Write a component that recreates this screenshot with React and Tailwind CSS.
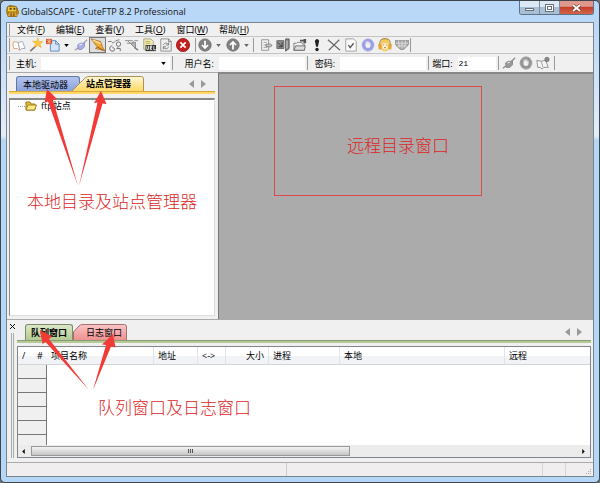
import { useState } from "react";
import clsx from "clsx";

const menus = [
  ["文件", "F"],
  ["编辑", "E"],
  ["查看", "V"],
  ["工具", "O"],
  ["窗口", "W"],
  ["帮助", "H"],
];

const columns = [
  { label: "/", width: "w-[15px]" },
  { label: "#", width: "w-[14px]" },
  { label: "项目名称", width: "w-[107px]" },
  { label: "地址", width: "w-[44px]" },
  { label: "<->", width: "w-[28px]" },
  { label: "大小", width: "w-[43px]", align: "text-right" },
  { label: "进程", width: "w-[71px]" },
  { label: "本地", width: "w-[165px]" },
  { label: "远程", width: "w-auto" },
];

function Glyph({ children }) {
  return (
    <svg viewBox="0 0 16 16" className="h-[14px] w-[14px]" fill="none" aria-hidden="true">
      {children}
    </svg>
  );
}

const icons = {
  book: (
    <Glyph>
      <path d="M2 4l5 1 2 9-3-2-4 0-1-5z" fill="#fff" stroke="#e2a06a" />
      <path d="M7 5l5-1 3 8-4 0-2 2z" fill="#fff" stroke="#96a3c2" />
    </Glyph>
  ),
  wand: (
    <Glyph>
      <path d="M1.500 15L8 9" stroke="#7d7468" strokeWidth="1.800" />
      <path d="M10 0l1.500 4 4.500 0-3.500 3 1.500 4-4-2.500-4 2 1.500-4L4 3.500l4.500.5z" fill="#fbc93f" stroke="#eaa92a" strokeWidth=".6" />
    </Glyph>
  ),
  newDoc: (
    <Glyph>
      <path d="M5 3h6l4 4v8H5z" fill="#d3e5fa" stroke="#5c86bd" />
      <path d="M11 3v4h4" stroke="#5c86bd" />
      <path d="M0 1h7v6H0z" fill="#d9512f" />
      <path d="M1 2l5 4M6 2L1 6M3.500 1v6" stroke="#ffd9a0" strokeWidth=".8" />
    </Glyph>
  ),
  plug: (
    <Glyph>
      <path d="M1 14l4-3M11 6l4-4" stroke="#a2a3b4" strokeWidth="1.500" />
      <path d="M4 8l3-2 5 0 0 4-3 3-4 0z" fill="#a9aee6" stroke="#8f93c4" />
      <path d="M6 8l3-1" stroke="#e8eaff" strokeWidth="1.500" />
    </Glyph>
  ),
  connect: (
    <Glyph>
      <path d="M0 1l11 3 2 6 3 5-6-2-5-1 2-2z" fill="#f2ab35" stroke="#9c6420" strokeWidth=".8" />
      <path d="M2 2.500l9 4" stroke="#ffe49a" strokeWidth="1.500" />
      <path d="M7 10l7 4" stroke="#8a5217" />
    </Glyph>
  ),
  chain: (
    <Glyph>
      <path d="M0 4h4l2 2 3-3 4-1" stroke="#777" />
      <path d="M5 9c-4 0-4 6 0 6s3-4 0-4" stroke="#555" />
      <circle cx="12" cy="7" r="2.500" stroke="#666" />
      <path d="M12 10l-2 2h4v3" stroke="#666" />
    </Glyph>
  ),
  unplug: (
    <Glyph>
      <path d="M0 3h9M2 6h6l3-3h4M3 3l8 8" stroke="#888" />
      <path d="M6 6l6 6V5z" fill="#b5b5b5" stroke="#888" />
      <path d="M11 11l4 3" stroke="#777" strokeWidth="1.500" />
    </Glyph>
  ),
  url: (
    <Glyph>
      <path d="M2 1h8l3 3v9H2z" fill="#f1ebb8" stroke="#a5a080" />
      <path d="M4 4h5M4 6h6" stroke="#b9a94e" />
      <path d="M4 8h12v7H4z" fill="#2f2f2f" />
      <path d="M5.500 9v4h2V9M9.500 14V9h1.500v2H9.500l2 3M13.500 9v4.500H16" stroke="#fff" strokeWidth=".9" />
    </Glyph>
  ),
  refreshDoc: (
    <Glyph>
      <path d="M2 1h9l3 3v11H2z" fill="#eee" stroke="#8a8a8a" />
      <path d="M11 1v3h3M5 8c1-3 5-3 6 0M11 5v3H8M11 10c-1 3-5 3-6 0M5 13v-3h3" stroke="#777" />
    </Glyph>
  ),
  stop: (
    <Glyph>
      <circle cx="8" cy="8" r="7.500" fill="#c5201f" stroke="#962022" />
      <path d="M5 5l6 6M11 5l-6 6" stroke="#fff" strokeWidth="2" />
    </Glyph>
  ),
  download: (
    <Glyph>
      <circle cx="8" cy="8" r="7" fill="#808080" stroke="#6a6a6a" />
      <path d="M8 3v8M4.500 8L8 11.500 11.500 8" stroke="#fff" strokeWidth="2" />
    </Glyph>
  ),
  upload: (
    <Glyph>
      <circle cx="8" cy="8" r="7" fill="#808080" stroke="#6a6a6a" />
      <path d="M8 13V5M4.500 8L8 4.500 11.500 8" stroke="#fff" strokeWidth="2" />
    </Glyph>
  ),
  edit: (
    <Glyph>
      <path d="M3 2h8v12H3z" fill="#f5f5f5" stroke="#8a8a8a" />
      <path d="M5 5h4M5 8h3M5 11h4" stroke="#999" />
      <path d="M8 7h5l2 1.500-2 1.500H8z" fill="#ccc" stroke="#777" />
    </Glyph>
  ),
  compare: (
    <Glyph>
      <path d="M1 3h8v9H1z" fill="#8f8f8f" stroke="#666" />
      <path d="M2 5l5 5M7 5v5H3" stroke="#333" />
      <path d="M11 1h4v11l-4 3z" fill="#888" stroke="#555" />
      <path d="M12.500 3v9" stroke="#ddd" />
    </Glyph>
  ),
  folder: (
    <Glyph>
      <path d="M1 14V6h3l1-1h5l1 2h2v7z" fill="#f2f2f2" stroke="#777" />
      <path d="M1 14l2-5h11l-1 5z" fill="#ddd" stroke="#666" />
      <path d="M8 4V2h4V1h3v5h-3V4z" fill="#555" />
    </Glyph>
  ),
  bang: (
    <Glyph>
      <path d="M5.500 3Q8-1 10.500 3L9 10H7z" fill="#222" />
      <circle cx="8" cy="13" r="2" fill="#222" />
    </Glyph>
  ),
  cross: (
    <Glyph>
      <path d="M1 2l14 12M14 2L2 14" stroke="#666" strokeWidth="1.300" />
    </Glyph>
  ),
  checkDoc: (
    <Glyph>
      <path d="M2 1h9l3 3v11H2z" fill="#fafafa" stroke="#999" />
      <path d="M5 8l2 3 4-5" stroke="#555" strokeWidth="1.500" />
    </Glyph>
  ),
  gear: (
    <Glyph>
      <ellipse cx="8" cy="8" rx="5" ry="5.500" stroke="#9ba0e2" strokeWidth="4" />
      <circle cx="8" cy="8" r="7" stroke="#c3c6f2" strokeDasharray="2 2" />
      <path d="M5 5l3-1 3 3" stroke="#c9ccf6" strokeWidth="1.500" />
    </Glyph>
  ),
  grayGear: (
    <Glyph>
      <ellipse cx="8" cy="8" rx="5" ry="5.500" stroke="#969696" strokeWidth="4" />
      <circle cx="8" cy="8" r="7" stroke="#bbb" strokeDasharray="2 2" />
      <path d="M5 5l3-1 3 3" stroke="#c5c5c5" strokeWidth="1.500" />
    </Glyph>
  ),
  headset: (
    <Glyph>
      <path d="M3 6c0-7 10-7 10 0v6l-3 3H6l-3-3z" fill="#f6c95a" />
      <path d="M2 9V6c0-7 12-7 12 0v3" stroke="#b08c45" strokeWidth="1.300" />
      <path d="M0 7h4v6H1zM12 7h4l-1 6h-3z" fill="#e3a339" />
      <path d="M5 6h6v6l-2 1H7l-2-1z" fill="#fdf0cc" />
      <path d="M6 8h1M9 8h1M7 11h2" stroke="#8b6937" />
    </Glyph>
  ),
  globe: (
    <Glyph>
      <path d="M0 3h16c0 3-1 6-3 7l-3 3H6l-3-3C1 9 0 6 0 3z" fill="#a8a8a8" stroke="#8d8d8d" />
      <path d="M1 6h14M3 9h10M4 3l1 8M8 3v9M12 3l-1 8" stroke="#e0e0e0" />
    </Glyph>
  ),
  grayPlug: (
    <Glyph>
      <path d="M1 14l4-3M11 6l4-4" stroke="#8d8d8d" strokeWidth="1.500" />
      <path d="M4 8l3-2 5 0 0 4-3 3-4 0z" fill="#999" stroke="#858585" />
      <path d="M6 8l3-1" stroke="#ddd" strokeWidth="1.500" />
    </Glyph>
  ),
  bookGear: (
    <Glyph>
      <path d="M1 5l5 1 5-1 3 8-5 0-2 2-2-2-3 0z" fill="#f5f5f5" stroke="#888" />
      <path d="M6 6l2 7" stroke="#999" />
      <circle cx="12.500" cy="4" r="2.500" fill="#888" stroke="#777" />
    </Glyph>
  ),
};

function AppIcon() {
  return (
    <svg viewBox="0 0 14 14" className="h-[13px] w-[13px] shrink-0" aria-hidden="true">
      <path d="M1 2l3-2 7 1 2 3-1 9H2L0 7z" fill="#8d6a1b" />
      <path d="M2 2h9v5H2z" fill="#f0c838" />
      <path d="M3 8h8l1 4H2z" fill="#e4a62a" />
      <path d="M4 3h2v2H4zM8 3h2v2H8zM5 9h1v3H5zM8 9h1v3H8z" fill="#4b3a1a" />
      <path d="M11 6h3v4h-3zM0 5h2v4H0z" fill="#b98620" />
    </svg>
  );
}

function ToolButton({ icon, label, pressed }) {
  return (
    <button
      type="button"
      aria-label={label}
      aria-pressed={pressed}
      className={clsx(
        "flex h-4 w-[17px] shrink-0 items-center justify-center",
        pressed && "border border-[#777] bg-[#dedede]"
      )}
    >
      {icons[icon]}
    </button>
  );
}

function DropArrow({ label, dark }) {
  return (
    <button type="button" aria-label={label} className="flex h-4 w-[11px] shrink-0 items-center justify-center">
      <svg viewBox="0 0 6 4" className={clsx("h-[3px] w-[5px]", dark ? "fill-black" : "fill-[#666]")}>
        <path d="M0 0h6L3 4z" />
      </svg>
    </button>
  );
}

function Separator() {
  return <span className="h-[14px] w-px shrink-0 bg-[#999]" />;
}

function TitleBar() {
  return (
    <header className="flex h-[21px] shrink-0 items-start justify-between">
      <div className="flex h-[21px] items-center gap-[2px]">
        <AppIcon />
        <h1 className="font-['Open_Sans',sans-serif] text-[9px] leading-none text-[#111]">
          GlobalSCAPE - CuteFTP 8.2 Professional
        </h1>
      </div>
      <div className="flex h-[14px] overflow-hidden rounded-b-[3px] border border-t-0 border-[#5d7388]">
        <button
          type="button"
          aria-label="最小化"
          className="flex w-5 items-center justify-center border-r border-[#7a8da0] bg-linear-to-b from-[#dce9f5] from-50% to-[#a9bfd5] to-50%"
        >
          <span className="mt-1 h-[3px] w-[9px] border border-[#66717d] bg-white" />
        </button>
        <button
          type="button"
          aria-label="最大化"
          className="flex w-5 items-center justify-center border-r border-[#7a8da0] bg-linear-to-b from-[#dce9f5] from-50% to-[#a9bfd5] to-50%"
        >
          <span className="flex h-2 w-[9px] items-center justify-center border border-[#66717d] bg-white">
            <span className="h-1 w-[5px] border border-[#66717d]" />
          </span>
        </button>
        <button
          type="button"
          aria-label="关闭"
          className="flex w-[33px] items-center justify-center bg-linear-to-b from-[#e0988c] from-40% via-[#c3402b] via-50% to-[#d4654a]"
        >
          <svg viewBox="0 0 9 8" className="h-2 w-[9px]">
            <path d="M1 1l7 6M8 1L1 7" stroke="#6e2a22" strokeWidth="3" />
            <path d="M1 1l7 6M8 1L1 7" stroke="#fff" strokeWidth="2" />
          </svg>
        </button>
      </div>
    </header>
  );
}

function MenuBar() {
  return (
    <nav className="flex h-[14px] shrink-0 items-center border-b border-[#c4c4c4] pl-[2px]">
      <ul className="flex gap-[11px] border-l border-[#999] pl-[7px]">
        {menus.map(([name, key]) => (
          <li key={key} className="flex">
            <button type="button" className="leading-[12px]">
              {name}(<span className="underline">{key}</span>)
            </button>
          </li>
        ))}
      </ul>
    </nav>
  );
}

function Toolbar() {
  return (
    <div role="toolbar" className="flex h-[17px] shrink-0 items-center border-b border-[#c4c4c4] pl-[2px]">
      <Separator />
      <ToolButton icon="book" label="站点管理器" />
      <ToolButton icon="wand" label="连接向导" />
      <ToolButton icon="newDoc" label="新建" />
      <DropArrow label="新建选项" dark />
      <ToolButton icon="plug" label="连接" />
      <ToolButton icon="connect" label="快速连接" pressed />
      <ToolButton icon="chain" label="重新连接" />
      <ToolButton icon="unplug" label="断开" />
      <ToolButton icon="url" label="URL" />
      <ToolButton icon="refreshDoc" label="刷新" />
      <ToolButton icon="stop" label="停止" />
      <div className="flex items-center pr-px pl-1">
        <Separator />
        <ToolButton icon="download" label="下载" />
        <DropArrow label="下载选项" />
        <ToolButton icon="upload" label="上传" />
        <DropArrow label="上传选项" />
      </div>
      <Separator />
      <div className="flex items-center pl-[3px]">
        <ToolButton icon="edit" label="编辑" />
        <ToolButton icon="compare" label="比较" />
        <ToolButton icon="folder" label="新建文件夹" />
        <ToolButton icon="bang" label="执行" />
        <ToolButton icon="cross" label="删除" />
        <ToolButton icon="checkDoc" label="属性" />
        <ToolButton icon="gear" label="选项" />
        <ToolButton icon="headset" label="支持" />
        <ToolButton icon="globe" label="网站" />
      </div>
      <Separator />
    </div>
  );
}

function Field({ id, label, width, value }) {
  const [text, setText] = useState(value ?? "");
  return (
    <div className="flex items-center gap-[5px]">
      <label htmlFor={id} className="leading-none">
        {label}:
      </label>
      <input
        id={id}
        value={text}
        onChange={(e) => setText(e.target.value)}
        className={clsx("h-[13px] bg-white px-px font-['Liberation_Mono',monospace] text-[8px]", width)}
      />
    </div>
  );
}

function ConnectBar() {
  return (
    <form className="flex h-[18px] shrink-0 items-center pl-[2px]">
      <Separator />
      <div className="flex items-center gap-[5px] pr-[2px] pl-[6px]">
        <label htmlFor="host" className="leading-none">
          主机:
        </label>
        <div className="relative flex">
          <select id="host" className="h-[13px] w-[129px] appearance-none bg-white text-[8px]" />
          <svg viewBox="0 0 6 4" className="pointer-events-none absolute top-[5px] right-1 h-[3px] w-[5px]">
            <path d="M0 0h6L3 4z" />
          </svg>
        </div>
      </div>
      <Separator />
      <div className="pr-[2px] pl-[11px]">
        <Field id="user" label="用户名" width="w-[86px]" />
      </div>
      <Separator />
      <div className="pr-[2px] pl-[7px]">
        <Field id="password" label="密码" width="w-[86px]" />
      </div>
      <Separator />
      <div className="pr-[2px] pl-[3px]">
        <Field id="port" label="端口" width="w-[38px]" value="21" />
      </div>
      <Separator />
      <div className="flex items-center px-[2px]">
        <ToolButton icon="grayPlug" label="连接" />
        <ToolButton icon="grayGear" label="设置" />
        <ToolButton icon="bookGear" label="添加到站点管理器" />
      </div>
      <Separator />
    </form>
  );
}

// pair of small triangles that scroll a tab strip
function TabScroller() {
  return (
    <div className="ml-auto flex items-center gap-[7px]">
      <button type="button" aria-label="上一个">
        <svg viewBox="0 0 5 8" className="h-2 w-[5px] fill-[#999]">
          <path d="M5 0v8L0 4z" />
        </svg>
      </button>
      <button type="button" aria-label="下一个">
        <svg viewBox="0 0 5 8" className="h-2 w-[5px] fill-[#999]">
          <path d="M0 0v8l5-4z" />
        </svg>
      </button>
    </div>
  );
}

function Note({ className, children }) {
  return (
    <p
      className={clsx(
        "pointer-events-none absolute text-[17px] leading-5 font-light whitespace-nowrap text-[#dc2626]",
        className
      )}
    >
      {children}
    </p>
  );
}

function SitePane() {
  return (
    <section className="relative flex w-[212px] shrink-0 flex-col border-t border-r border-t-[#aaa] border-r-[#777] pt-[3px] pr-[3px] pl-[2px]">
      <div role="tablist" className="flex h-[15px] pr-[9px] pl-[7px]">
        <button
          role="tab"
          aria-selected="false"
          className="relative -mr-2 flex w-[64px] items-center rounded-t-[3px] border border-b-0 border-[#64789f] bg-linear-to-b from-[#b3c4ec] to-[#8ba2dd] pl-[6px] leading-none"
        >
          本地驱动器
        </button>
        <button role="tab" aria-selected="true" className="relative flex w-[72px] items-center pl-[14px] leading-none font-bold">
          <svg viewBox="0 0 72 15" preserveAspectRatio="none" className="absolute inset-0 h-full w-full">
            <defs>
              <linearGradient id="gold" x2="0" y2="1">
                <stop stopColor="#fff6d4" />
                <stop offset="1" stopColor="#ffd964" />
              </linearGradient>
            </defs>
            <path d="M0 15L12 3Q14 .5 17 .5H69.500Q71.500.5 71.500 3V15" fill="url(#gold)" stroke="#a9955c" />
          </svg>
          <span className="relative">站点管理器</span>
        </button>
        <TabScroller />
      </div>
      <div className="h-[3px] shrink-0 border-t border-[#d5a844] bg-[#ffd968]" />
      <div className="mt-1 mb-[3px] flex-1 border border-t-2 border-[#888] border-r-[#ddd] border-b-[#ddd] bg-white pl-2">
        <ul role="tree">
          <li role="treeitem" className="flex items-center leading-3">
            <span className="w-[7px] border-t border-dotted border-[#999]" />
            <svg viewBox="0 0 12 10" className="mr-1 h-[10px] w-3">
              <path d="M1 9V1h4l1 2h4v6z" fill="#e8bd34" stroke="#9a7918" />
              <path d="M1 9l2-5h8.500L9.500 9z" fill="#ffeb8a" stroke="#a58422" />
            </svg>
            ftp站点
          </li>
        </ul>
      </div>
      <svg viewBox="0 0 90 110" className="pointer-events-none absolute top-3 left-[26px] h-[110px] w-[90px] fill-[#f23a36]">
        <path d="M14 4L11.500 18l3.500-1.500L45 101 20 15l4-1zM68 6L61 18l3.500-.5L46 101 69.500 18.500l4 .5z" />
      </svg>
      <Note className="top-[119px] left-5">本地目录及站点管理器</Note>
    </section>
  );
}

function RemoteArea() {
  return (
    <section className="relative flex-1 border-t-2 border-[#888] bg-[#ababab]">
      <div className="absolute top-3 left-[55px] h-[110px] w-[208px] border border-[#dc4a4a]" />
      <Note className="top-[62px] left-32">远程目录窗口</Note>
    </section>
  );
}

function QueuePane() {
  return (
    <section className="relative flex h-[143px] shrink-0 border-t border-[#aaa]">
      <div className="flex w-[10px] shrink-0 flex-col items-center pt-1 pb-1">
        <button type="button" aria-label="关闭窗格">
          <svg viewBox="0 0 5 5" className="h-[5px] w-[5px]">
            <path d="M0 0l5 5M5 0L0 5" stroke="#111" strokeWidth="1" />
          </svg>
        </button>
        <span className="mt-1 w-[3px] flex-1 border-x border-[#aaa]" />
      </div>
      <div className="flex min-w-0 flex-1 flex-col pt-1 pr-[2px]">
        <div role="tablist" className="flex h-4 pr-[9px] pl-2">
          <button
            role="tab"
            aria-selected="true"
            className="flex w-12 items-center justify-center rounded-t-[3px] border border-b-0 border-[#7c8b68] bg-linear-to-b from-[#dbe7c7] to-[#b3ca93] leading-none font-bold"
          >
            队列窗口
          </button>
          <button role="tab" aria-selected="false" className="relative flex w-[54px] items-center pl-[13px] leading-none">
            <svg viewBox="0 0 54 16" preserveAspectRatio="none" className="absolute inset-0 h-full w-full">
              <defs>
                <linearGradient id="rose" x2="0" y2="1">
                  <stop stopColor="#f8c5c5" />
                  <stop offset="1" stopColor="#ee9191" />
                </linearGradient>
              </defs>
              <path d="M.5 16V8L6 2Q7 .5 10 .5H51.500Q53.500.5 53.500 3V16" fill="url(#rose)" stroke="#a77070" />
            </svg>
            <span className="relative">日志窗口</span>
          </button>
          <TabScroller />
        </div>
        <div className="h-[3px] shrink-0 border-t border-[#8a9a72] bg-[#b5cb96]" />
        <div className="mt-[3px] mb-1 flex min-h-0 flex-1 flex-col border border-[#80848c] bg-white">
          <div className="min-h-0 flex-1 overflow-hidden">
            <table className="w-full table-fixed border-separate border-spacing-0">
              <thead>
                <tr className="h-[18px] bg-linear-to-b from-white from-50% to-[#f1f3f6] to-50%">
                  {columns.map((col, i) => (
                    <th
                      key={col.label}
                      className={clsx(
                        "border-b border-[#d5d5d5] p-0 px-1 leading-none font-normal whitespace-nowrap",
                        col.width,
                        col.align ?? "text-left",
                        i > 1 && i < 8 && "border-r border-r-[#e2e4e7]"
                      )}
                    >
                      {col.label}
                    </th>
                  ))}
                </tr>
              </thead>
              <tbody>
                {[1, 2, 3, 4, 5, 6].map((row) => (
                  <tr key={row} className="h-[14px]">
                    <td colSpan={2} className="border-r border-b border-[#777] bg-[#f0f0f0] p-0" />
                    <td colSpan={7} className="p-0" />
                  </tr>
                ))}
              </tbody>
            </table>
          </div>
          <div className="flex h-3 shrink-0 items-center bg-[#ececec] pr-[5px] pl-1">
            <svg viewBox="0 0 3 6" className="h-[5px] w-[3px]">
              <path d="M3 0v6L0 3z" />
            </svg>
            <div className="ml-[6px] flex h-[10px] w-[319px] items-center justify-center gap-px border border-[#999] bg-linear-to-b from-[#f3f3f3] to-[#c5c5c5]">
              <span className="h-1 w-px bg-[#555]" />
              <span className="h-1 w-px bg-[#555]" />
              <span className="h-1 w-px bg-[#555]" />
            </div>
            <svg viewBox="0 0 3 6" className="ml-auto h-[5px] w-[3px]">
              <path d="M0 0v6l3-3z" />
            </svg>
          </div>
        </div>
      </div>
      <svg viewBox="0 0 100 70" className="pointer-events-none absolute top-[5px] left-[26px] h-[70px] w-[100px] fill-[#f23a36]">
        <path d="M7 5l2.500 14 3-2L56 65 16 14l3-2.500zM80 9L69 19.500l4 .5-13 45 18-43.500 4.500 1z" />
      </svg>
      <Note className="top-[78px] left-[91px]">队列窗口及日志窗口</Note>
    </section>
  );
}

function StatusBar() {
  return (
    <footer className="flex h-[14px] shrink-0 items-stretch border-t border-[#aaa] bg-[#f0eeee]">
      <span className="w-[280px] border-r border-[#ccc]" />
      <span className="flex-1 border-r border-[#d5d5d5]" />
      <span className="w-[23px] border-r border-[#d5d5d5]" />
      <span className="flex w-[27px] items-end justify-end p-px">
        <svg viewBox="0 0 6 6" className="h-[6px] w-[6px] fill-[#aaa]">
          <path d="M4 0h1v1H4zM2 2h1v1H2zM4 2h1v1H4zM0 4h1v1H0zM2 4h1v1H2zM4 4h1v1H4z" />
        </svg>
      </span>
    </footer>
  );
}

export default function App() {
  return (
    <div className="h-screen bg-[#6b7076] font-['Open_Sans','Noto_Sans_CJK_SC',sans-serif] text-[9px] text-black">
      <div className="flex h-full flex-col rounded-[5px] border border-[#3d454e] bg-linear-to-b from-[#b9d8f8] from-5% via-[#e3eef9] via-28% to-[#b5d6f5] to-29% px-[5px] pb-[5px]">
        <TitleBar />
        <main className="flex min-h-0 flex-1 flex-col border border-[#78858f] bg-[#f0f0f0]">
          <MenuBar />
          <Toolbar />
          <ConnectBar />
          <div className="flex min-h-0 flex-1">
            <SitePane />
            <RemoteArea />
          </div>
          <QueuePane />
          <StatusBar />
        </main>
      </div>
    </div>
  );
}
